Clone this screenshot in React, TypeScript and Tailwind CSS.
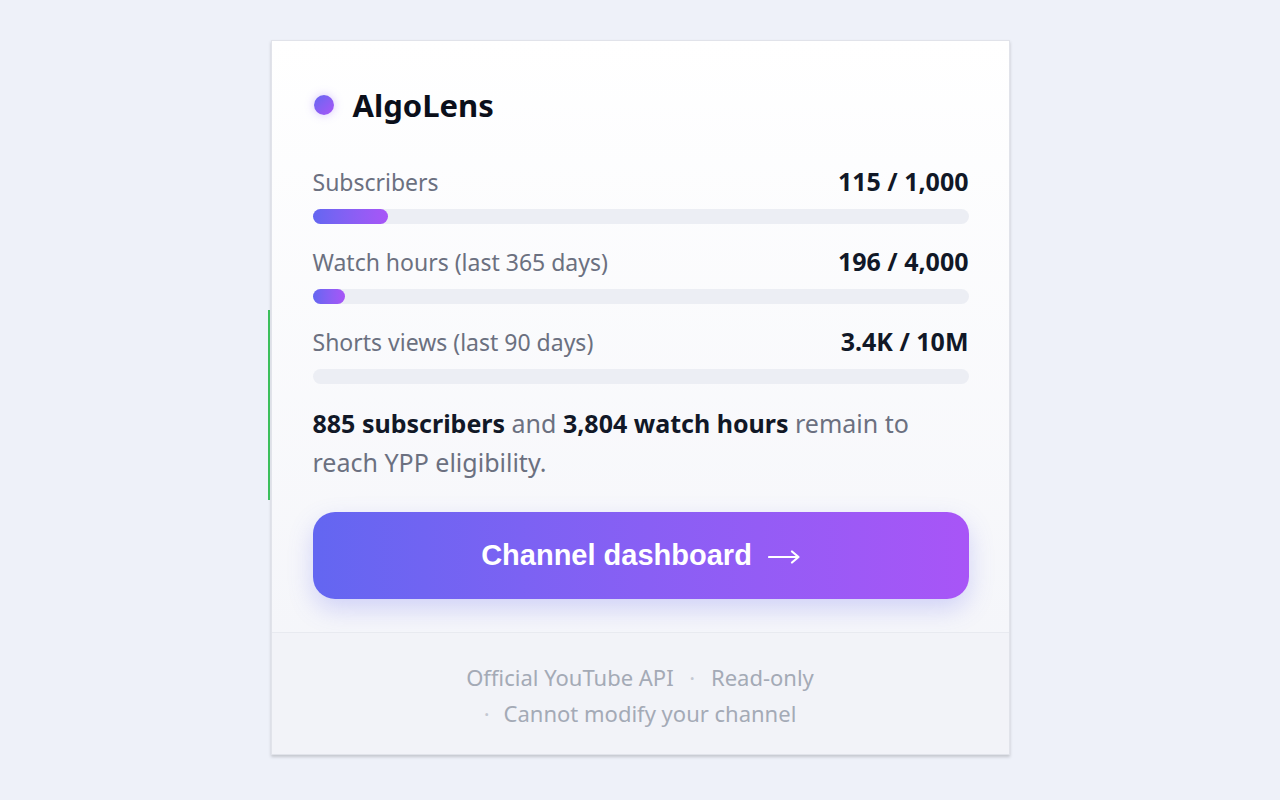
import React from "react";

interface MetricProps {
  label: string;
  value: string;
  current: number;
  goal: number;
}

const Metric = ({ label, value, current, goal }: MetricProps) => {
  const pct = Math.min(100, (current / goal) * 100);
  return (
    <div>
      <div className="flex h-[28px] items-center justify-between">
        <span className="text-[23px] text-[#6b7080]">{label}</span>
        <span className="text-[25px] font-bold text-[#111827]">{value}</span>
      </div>
      <div className="mt-[13px] h-[15px] w-full rounded-full bg-[#eceef4]">
        <div
          className="h-full rounded-full bg-gradient-to-r from-[#6366f1] to-[#a855f7]"
          style={{ width: `${pct}%` }}
        />
      </div>
    </div>
  );
};

const App = () => {
  return (
    <div
      className="min-h-[800px] w-full bg-[#eef1f9] pt-[40px]"
      style={{ fontFamily: '"Noto Sans", "Open Sans", sans-serif' }}
    >
      <div className="relative mx-auto w-[739px]">
        {/* page behind the popup peeks out on the left */}
        <div className="absolute left-[-3px] top-[270px] h-[190px] w-[2px] bg-[#3cbf5c]" />

        <div className="overflow-hidden border border-[#e1e3ea] bg-gradient-to-b from-white to-[#f3f4f9] shadow-[0_2px_3px_rgba(0,0,0,0.18)]">
          <div className="pl-[41px] pr-[40px] pt-[44px]">
            <div className="flex h-[40px] items-center gap-[19px]">
              <div className="ml-px h-[20px] w-[20px] rounded-full bg-gradient-to-br from-[#6366f1] to-[#a855f7] shadow-[0_0_10px_rgba(139,92,246,0.35)]" />
              <span className="text-[31px] font-bold leading-none text-[#0b0f1a]">
                AlgoLens
              </span>
            </div>

            <div className="mt-[43px] flex flex-col gap-[24px]">
              <Metric label="Subscribers" value="115 / 1,000" current={115} goal={1000} />
              <Metric
                label="Watch hours (last 365 days)"
                value="196 / 4,000"
                current={196}
                goal={4000}
              />
              <Metric
                label="Shorts views (last 90 days)"
                value="3.4K / 10M"
                current={3400}
                goal={10000000}
              />
            </div>

            <p className="mt-[20px] text-[25px] leading-[39px] text-[#6b7080]">
              <strong className="font-bold text-[#111827]">885 subscribers</strong> and{" "}
              <strong className="font-bold text-[#111827]">3,804 watch hours</strong> remain to
              reach YPP eligibility.
            </p>

            <button
              className="mt-[30px] flex h-[87px] w-full items-center justify-center gap-[16px] rounded-[22px] bg-gradient-to-r from-[#6366f1] to-[#a855f7] text-white shadow-[0_10px_24px_rgba(99,102,241,0.25)]"
              style={{ fontFamily: '"Liberation Sans", Arial, sans-serif' }}
            >
              <span className="text-[29px] font-bold">Channel dashboard</span>
              <svg width="32" height="14" viewBox="0 0 32 14" fill="none" className="mt-[2px]">
                <path
                  d="M1 7H30M24 1.5L30.5 7L24 12.5"
                  stroke="white"
                  strokeWidth="2.2"
                  strokeLinecap="round"
                  strokeLinejoin="round"
                />
              </svg>
            </button>
          </div>

          <div className="mt-[33px] border-t border-[#e8eaf0] bg-[#f2f3f8] pb-[23px] pt-[26px] text-center text-[22px] leading-[36px] text-[#a4aab6]">
            <div>
              Official YouTube API <span className="mx-[10px] text-[#c4c8d2]">·</span> Read-only
            </div>
            <div>
              <span className="mr-[14px] text-[#c4c8d2]">·</span>Cannot modify your channel
            </div>
          </div>
        </div>
      </div>
    </div>
  );
};

export default App;
